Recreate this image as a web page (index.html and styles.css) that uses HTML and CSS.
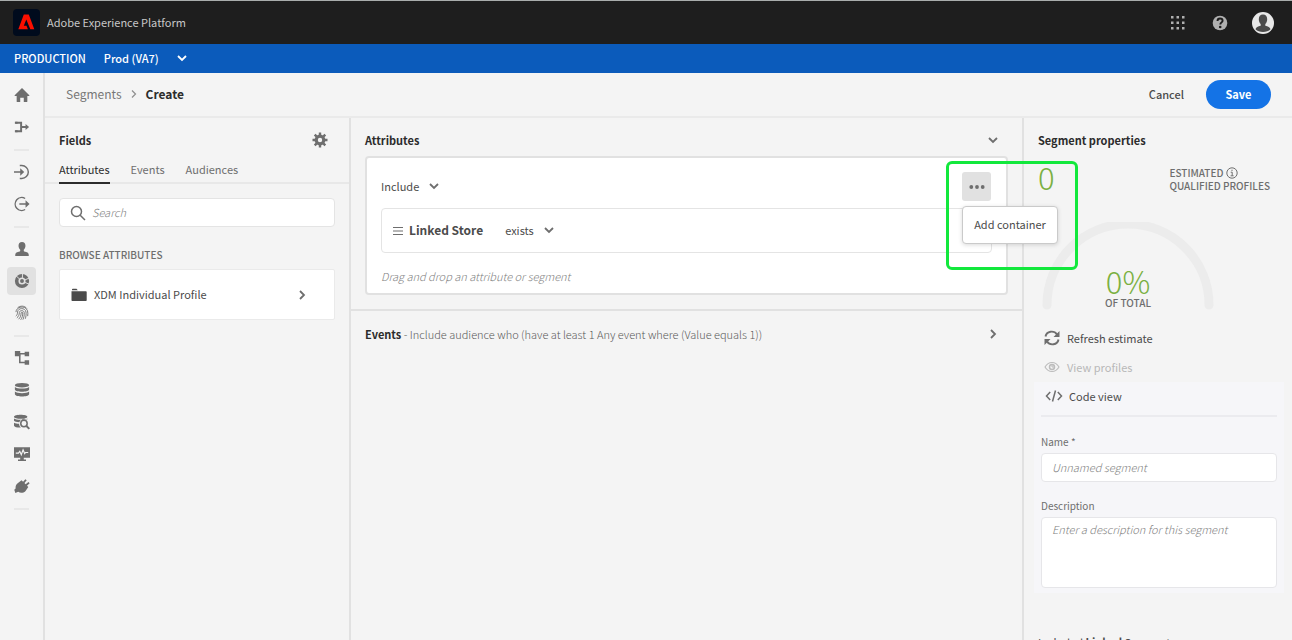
FILE: index.html
```html
<!DOCTYPE html>
<html lang="en">
<head>
<meta charset="utf-8">
<title>Create segment - Adobe Experience Platform</title>
<meta name="viewport" content="width=device-width, initial-scale=1">
<link rel="stylesheet" href="styles.css">
</head>
<body>
<header class="topbar">
  <svg class="logo" viewBox="0 0 27 27" aria-hidden="true"><rect width="27" height="27" rx="4" fill="#000b1d"/><path fill="#fa0f00" d="M10.800 5.500h5L21.300 20.300h-4L13.300 10.600 10.800 16.700h2.700l1.400 3.600H5.300z"/></svg>
  <span class="product">Adobe Experience Platform</span>
  <div class="top-actions">
    <button class="icon-btn" aria-label="Apps"><svg width="16" height="16" viewBox="0 0 16 16" fill="#b0b0b0"><path d="M1 1h2.500v2.500H1zM6.500 1H9v2.500H6.500zM12 1h2.500v2.500H12zM1 6.500h2.500V9H1zM6.500 6.500H9V9H6.500zM12 6.500h2.500V9H12zM1 12h2.500v2.500H1zM6.500 12H9v2.500H6.500zM12 12h2.500v2.500H12z"/></svg></button>
    <button class="icon-btn" aria-label="Help"><svg width="16" height="16" viewBox="0 0 16 16"><circle cx="8" cy="8" r="7.300" fill="#b0b0b0"/><path d="M5.500 6C5.500 4.200 6.600 3.500 8 3.500s2.600.8 2.600 2.200C10.600 7.400 8.300 7.400 8.300 9.500" fill="none" stroke="#1e1e1e" stroke-width="1.900"/><circle cx="8.200" cy="12" r="1.300" fill="#1e1e1e"/></svg></button>
    <button class="icon-btn" aria-label="Account"><svg width="22" height="22" viewBox="0 0 22 22"><circle cx="11" cy="11" r="11" fill="#e8e8e8"/><path fill="#4b4b4b" d="M11 2.500c2.700 0 4.200 1.900 4.200 4.700 0 2-.8 3.800-1.900 4.800v1.700c2.600.6 5 1.400 5.200 3.600-1.700 1.800-4.500 2.700-7.500 2.700s-5.800-.9-7.500-2.700c.2-2.200 2.600-3 5.200-3.600V12c-1.100-1-1.900-2.800-1.900-4.800 0-2.800 1.500-4.700 4.200-4.700z"/></svg></button>
  </div>
</header>
<div class="sandbox-bar">
  <span>PRODUCTION</span>
  <button class="sandbox-pick">Prod (VA7)<svg class="chev" viewBox="0 0 10 10"><path d="M1 3l4 4 4-4"/></svg></button>
</div>
<div class="shell">
  <nav class="rail" aria-label="Main">
    <a href="#" aria-label="Home"><svg viewBox="0 0 18 18"><path d="M9 1L.8 9.200c-.3.400-.1.800.4.800H3v6.300c0 .4.300.7.700.7H7v-5h4v5h3.300c.4 0 .7-.3.700-.7V10h1.800c.5 0 .7-.4.400-.8z"/></svg></a>
    <a href="#" aria-label="Workflows"><svg viewBox="0 0 18 18"><path d="M1.500 4.200H8v9.600H1.500M8 9h5.500" fill="none" stroke="#6e6e6e" stroke-width="2.200"/><path d="M13 5.500L17 9l-4 3.500zM1 3h3v2.400H1zM1 12.600h3V15H1z"/></svg></a>
    <hr>
    <a href="#" aria-label="Sources"><svg viewBox="0 0 18 18"><path d="M6.500 1.700h2.300a7.300 7.300 0 0 1 0 14.600H6.500" fill="none" stroke="#6e6e6e" stroke-width="1.600"/><path d="M0 8.200h7V4.800L11.500 9 7 13.200V9.800H0z"/></svg></a>
    <a href="#" aria-label="Destinations"><svg viewBox="0 0 18 18"><path d="M12.500 2.800A7.300 7.300 0 1 0 12.500 15.200" fill="none" stroke="#6e6e6e" stroke-width="1.600"/><path d="M6 8.200h7V4.800L17.500 9 13 13.200V9.800H6z"/></svg></a>
    <hr>
    <a href="#" aria-label="Profiles"><svg viewBox="0 0 18 18"><path d="M9 1c2.600 0 3.900 1.800 3.900 4.300 0 1.900-.8 3.600-1.900 4.600v1.200c0 .4.200.7.600.8 3 .5 5 1.500 5 3.600V17H1.400v-1.500c0-2.100 2-3.100 5-3.600.4-.1.600-.4.600-.8V9.900C5.900 8.900 5.100 7.200 5.100 5.300 5.100 2.800 6.400 1 9 1z"/></svg></a>
    <a href="#" class="current" aria-label="Segments" aria-current="page"><svg viewBox="0 0 18 18"><circle cx="9" cy="9" r="6" fill="none" stroke="#6e6e6e" stroke-width="4"/><circle cx="9" cy="9" r="2.200"/><path d="M9.500 5.500V0M11.800 8L17.500 5.500M12 10.500l5 2M6.500 7L2 2.800" stroke="#e1e1e1" stroke-width="1.100"/></svg></a>
    <a href="#" aria-label="Identities"><svg viewBox="0 0 18 18" class="lines"><path d="M4 3.200C7 .5 12 .6 14.500 4M2.200 8c0-6 10.300-8.500 13-1.500.5 1.800.5 4 .2 6M2 12.500c1.500-1 1.900-2.500 2-4.500.2-5 8.700-5.500 9.500 0 .3 2.500 0 5-.8 7.500M3.200 14.500c2-1.500 2.700-3.500 2.800-6C6.200 5.700 11 5.500 11.500 8.500c.3 2.900-.4 5.500-1.500 8M5.200 16c2-2 2.700-4.300 2.800-7 .1-1.300 1.700-1.300 1.800 0 .1 3-.7 5.400-2.300 7.700"/></svg></a>
    <hr>
    <a href="#" aria-label="Schemas"><svg viewBox="0 0 18 18"><path d="M1 1h6v6H1zM12 2h5v5h-5zM12 11.500h5v5h-5z"/><path d="M6 4.300h7M6.500 5v9H13" fill="none" stroke="#6e6e6e" stroke-width="1.700"/></svg></a>
    <a href="#" aria-label="Datasets"><svg viewBox="0 0 18 18"><ellipse cx="9" cy="3.600" rx="8" ry="2.600"/><path d="M1 5.500c2.500 2.400 13.500 2.400 16 0v3.300c-1 3-15 3-16 0zM1 10.800c2.500 2.400 13.500 2.400 16 0v3c-1 3.400-15 3.400-16 0z"/></svg></a>
    <a href="#" aria-label="Queries"><svg viewBox="0 0 18 18"><path d="M0 3c0-3 15-3 15 0s-15 3-15 0zM0 5c2 2 13 2 15 0v1.200C10.500 4.400 7 6.200 6 9.300 3 9.200.5 8.700 0 7.700zM0 9.800c1.600.8 3.500 1 5.700 1.100 0 1.700.8 3.300 2 4.400C4 15.400.4 15 0 13.300z"/><circle cx="11.200" cy="10.700" r="3.600" fill="none" stroke="#6e6e6e" stroke-width="1.700"/><path d="M14 13.500l3.300 3.300" stroke="#6e6e6e" stroke-width="2.200"/></svg></a>
    <a href="#" aria-label="Monitoring"><svg viewBox="0 0 18 18"><path d="M0 1.500h18v11.800h-7v2h2.500V17h-9v-1.700H7v-2H0z"/><path d="M2 8h3l1.500-2L8.200 9.800l2-5.500L12 8.500l1-1.200h3" fill="none" stroke="#f4f4f4" stroke-width="1.300"/></svg></a>
    <a href="#" aria-label="Connections"><svg viewBox="0 0 18 18"><path d="M8.500 2.600l1.700 1.700 2.600-3 1.500 1.300-2.500 3.100 1.300 1.200 3.200-2.500 1.300 1.500-3 2.700 1.500 1.500-3.300 4.700c-2.300 2.300-6 2.200-8 .8L1.500 17 .3 13.300l1.500-1.600C1.500 9 2.500 7 4.500 5.500z"/></svg></a>
    <hr>
  </nav>
  <main class="workspace">
    <div class="page-head">
      <nav class="crumbs" aria-label="Breadcrumb"><a href="#">Segments</a><svg class="crumb-sep" viewBox="0 0 8 8"><path d="M2 .5L5.500 4 2 7.500"/></svg><h1>Create</h1></nav>
      <div class="page-actions"><button class="cancel">Cancel</button><button class="save">Save</button></div>
    </div>
    <div class="columns">
      <section class="fields">
        <div class="panel-head"><h2>Fields</h2>
          <button class="icon-btn" aria-label="Settings"><svg width="16" height="16" viewBox="0 0 16 16"><circle cx="8" cy="8" r="3.800" fill="none" stroke="#6e6e6e" stroke-width="3.200"/><path d="M8 .5v3M8 12.500v3M.5 8h3M12.500 8h3M2.700 2.700l2 2M11.300 11.300l2 2M13.300 2.700l-2 2M4.700 11.300l-2 2" stroke="#6e6e6e" stroke-width="2.400"/></svg></button></div>
        <div class="tabs" role="tablist">
          <button class="tab selected" role="tab" aria-selected="true">Attributes</button>
          <button class="tab" role="tab" aria-selected="false">Events</button>
          <button class="tab" role="tab" aria-selected="false">Audiences</button>
        </div>
        <div class="fields-body">
          <label class="search"><svg width="16" height="16" viewBox="0 0 16 16"><circle cx="6.500" cy="6.500" r="5" /><path d="M10.200 10.200L15 15"/></svg><input type="search" placeholder="Search" aria-label="Search"></label>
          <h3 class="caption">BROWSE ATTRIBUTES</h3>
          <button class="folder"><svg width="16" height="14" viewBox="0 0 16 14"><path d="M1 1.500C1 1 1.300.8 1.800.8h3.700l1.300 1.500H1z" fill="#4b4b4b"/><path d="M.5 3.200H15c.4 0 .7.300.7.700v8.400c0 .4-.3.700-.7.700H1.200c-.4 0-.7-.3-.7-.7z" fill="#4b4b4b"/></svg><span>XDM Individual Profile</span><svg class="chev" viewBox="0 0 10 10"><path d="M3 1l4 4-4 4"/></svg></button>
        </div>
      </section>
      <section class="canvas">
        <div class="attributes">
          <div class="section-head"><h2>Attributes</h2><button class="icon-btn" aria-label="Collapse attributes"><svg class="chev" viewBox="0 0 10 10"><path d="M1 3l4 4 4-4"/></svg></button></div>
          <div class="group">
            <div class="group-head">
              <button class="picker">Include<svg class="chev" viewBox="0 0 10 10"><path d="M1 3l4 4 4-4"/></svg></button>
              <div class="more-wrap">
                <button class="more" aria-label="More options"><svg width="16" height="4" viewBox="0 0 16 4"><circle cx="2.300" cy="2" r="1.900"/><circle cx="8" cy="2" r="1.900"/><circle cx="13.700" cy="2" r="1.900"/></svg></button>
                <button class="menu">Add container</button>
                <div class="highlight"></div>
              </div>
            </div>
            <div class="rule">
              <svg width="10" height="8" viewBox="0 0 10 8"><path d="M0 .5h10M0 4h10M0 7.500h10" stroke="#6e6e6e"/></svg>
              <strong>Linked Store</strong>
              <button class="picker">exists<svg class="chev" viewBox="0 0 10 10"><path d="M1 3l4 4 4-4"/></svg></button>
            </div>
            <p class="hint">Drag and drop an attribute or segment</p>
          </div>
        </div>
        <div class="events"><p><b>Events</b> - Include audience who (have at least 1 Any event where (Value equals 1))</p><button class="icon-btn" aria-label="Expand events"><svg class="chev" viewBox="0 0 10 10"><path d="M3 1l4 4-4 4"/></svg></button></div>
      </section>
      <aside class="properties">
        <h2>Segment properties</h2>
        <div class="estimate"><span class="count">0</span>
          <div class="estimate-label"><span class="estimate-top">ESTIMATED <svg width="12" height="12" viewBox="0 0 12 12"><circle cx="6" cy="6" r="5.200"/><path d="M4.700 5.200H6.200v3.500M4.600 8.800h3M6 2.700v1.300"/></svg></span><span>QUALIFIED PROFILES</span></div></div>
        <div class="gauge">
          <svg viewBox="0 0 172 88"><path d="M5 83a81 81 0 0 1 162 0"/></svg>
          <div class="gauge-text"><span class="percent">0%</span><span class="total">OF TOTAL</span></div>
        </div>
        <button class="action"><svg width="16" height="16" viewBox="0 0 16 16"><path d="M1.500 6.500C2.500 1 10 0 13 4.500M14.500 9.500C13.500 15 6 16 3 11.500" fill="none" stroke="#6e6e6e" stroke-width="1.900"/><path d="M15.500 1v6h-6zM.5 15V9h6z" fill="#6e6e6e"/></svg>Refresh estimate</button>
        <button class="action" disabled><svg width="16" height="16" viewBox="0 0 16 16"><path d="M1 8C4.500 2 11.500 2 15 8 11.500 14 4.500 14 1 8z" fill="none" stroke="#bcbcbc" stroke-width="1.100"/><circle cx="8" cy="8" r="2.500" fill="none" stroke="#bcbcbc" stroke-width="1.500"/><path d="M8 5.500V8h2.500" fill="none" stroke="#bcbcbc"/></svg>View profiles</button>
        <div class="details">
          <button class="action code"><svg width="18" height="16" viewBox="0 0 18 16"><path d="M5.200 4L1.500 8l3.700 4M12.800 4l3.700 4-3.700 4M10.500 2.500l-3 11" fill="none" stroke="#6e6e6e" stroke-width="1.500"/></svg>Code view</button>
          <label for="name">Name *</label>
          <input id="name" type="text" placeholder="Unnamed segment">
          <label for="desc">Description</label>
          <textarea id="desc" placeholder="Enter a description for this segment"></textarea>
        </div>
        <p class="included">Included <b>Linked</b> Segments</p>
      </aside>
    </div>
  </main>
</div>
</body>
</html>
```
FILE: styles.css
```css
* { box-sizing: border-box; }
body {
  margin: 0;
  height: 100vh;
  display: flex;
  flex-direction: column;
  overflow: hidden;
  background: #f4f4f4;
  color: #4b4b4b;
  font: 11px/18px "Noto Sans CJK SC", "Noto Sans", sans-serif;
}
button, input, textarea { font: inherit; color: inherit; }
button { padding: 0; border: 0; background: none; cursor: pointer; }
h1, h2, h3, p { margin: 0; font-size: inherit; }
h1, h2 { color: #2c2c2c; }
svg { display: block; flex: none; }
.icon-btn { display: flex; justify-content: center; }
.chev { width: 10px; height: 10px; fill: none; stroke: #6e6e6e; stroke-width: 1.8; }

.topbar {
  flex: none;
  height: 44px;
  display: flex;
  align-items: center;
  gap: 7px;
  padding: 0 18px 0 13px;
  border-top: 1px solid #a9adac;
  background: #1e1e1e;
  color: #c8c8c8;
}
.logo { width: 27px; height: 27px; }
.product { padding-bottom: 2px; }
.top-actions { margin-left: auto; display: flex; align-items: center; gap: 22px; }
.top-actions .icon-btn { min-width: 20px; }
.sandbox-bar {
  flex: none;
  height: 29px;
  display: flex;
  align-items: center;
  gap: 18px;
  padding: 0 14px 2px;
  background: #0b5bbb;
  color: #fff;
  font-weight: 500;
}
.sandbox-pick { display: flex; align-items: center; gap: 18px; }
.sandbox-bar .chev { stroke: #fff; }

.shell { flex: 1; min-height: 0; display: flex; }
.rail {
  flex: none;
  width: 45px;
  padding: 8px 7px;
  display: flex;
  flex-direction: column;
  align-items: center;
  gap: 4px;
  border-right: 2px solid #e1e1e1;
}
.rail a { width: 29px; height: 28px; display: grid; place-items: center; border-radius: 4px; }
.rail svg { width: 16px; height: 16px; fill: #6e6e6e; }
.rail .lines { fill: none; stroke: #6e6e6e; stroke-width: 1; }
.rail .current { background: #e1e1e1; }
.rail hr { width: 15px; height: 2px; margin: 4px 0 3px; border: 0; background: #e8e8e8; flex: none; }

.workspace { flex: 1; min-width: 0; display: flex; flex-direction: column; }
.page-head {
  flex: none;
  height: 45px;
  display: flex;
  align-items: center;
  justify-content: space-between;
  padding: 0 21px;
  border-bottom: 2px solid #eaeaea;
}
.crumbs { display: flex; align-items: center; gap: 8px; padding-bottom: 1px; font-size: 12px; }
.crumbs a { color: #777; text-decoration: none; }
.crumb-sep { width: 8px; height: 8px; fill: none; stroke: #8e8e8e; stroke-width: 1.2; }
.page-actions { display: flex; align-items: center; gap: 22px; font-weight: 500; }
.cancel { padding-bottom: 2px; }
.save { width: 65px; height: 29px; padding-bottom: 2px; border-radius: 15px; background: #1473e6; color: #fff; font-weight: 700; }

.columns { flex: 1; min-height: 0; display: grid; grid-template-columns: 306px minmax(0, 1fr) 270px; }
.fields { border-right: 2px solid #e1e1e1; }
.panel-head { display: flex; align-items: center; justify-content: space-between; padding: 13px 21px 0 14px; }
.tabs { display: flex; gap: 21px; padding: 11px 14px 0; border-bottom: 2px solid #e8e8e8; }
.tab { height: 24px; margin-bottom: -2px; padding-bottom: 7px; border-bottom: 2px solid transparent; color: #6e6e6e; }
.tab.selected { color: #2c2c2c; border-color: #2c2c2c; }
.fields-body { padding: 14px 14px 0; }
.search {
  display: flex;
  align-items: center;
  gap: 6px;
  height: 29px;
  padding: 0 10px;
  border: 1px solid #e4e4e4;
  border-radius: 4px;
  background: #fff;
}
.search svg { fill: none; stroke: #6e6e6e; stroke-width: 1.5; }
.search input { flex: 1; min-width: 0; padding: 0 0 2px; border: 0; outline: 0; background: none; }
::placeholder { color: #808080; font-style: italic; font-weight: 300; opacity: 1; }
.caption { margin: 19px 0 5px; color: #6e6e6e; font-size: 10px; font-weight: 500; }
.folder {
  width: 100%;
  height: 51px;
  display: flex;
  align-items: center;
  gap: 7px;
  padding: 0 27px 0 11px;
  border: 1px solid #eaeaea;
  border-radius: 2px;
  background: #fff;
}
.folder span { padding-bottom: 2px; }
.folder .chev { margin-left: auto; }

.canvas { min-width: 0; }
.attributes { padding: 13px 14px 14px; border-bottom: 2px solid #e1e1e1; }
.section-head { display: flex; justify-content: space-between; align-items: center; padding-right: 10px; }
.group { margin-top: 7px; padding: 14px 14px 9px; border: 2px solid #e1e1e1; border-radius: 4px; background: #fff; }
.group-head { display: flex; align-items: center; justify-content: space-between; }
.picker { display: flex; align-items: center; gap: 10px; padding-bottom: 2px; }
.more-wrap { position: relative; margin-right: 1px; }
.more { width: 29px; height: 29px; display: grid; place-items: center; border-radius: 3px; background: #e1e1e1; }
.more svg { fill: #6e6e6e; }
.menu {
  position: absolute;
  z-index: 2;
  left: 0;
  top: 34px;
  width: 96px;
  height: 38px;
  padding-bottom: 2px;
  border: 1px solid #cacaca;
  border-radius: 4px;
  background: #fff;
  box-shadow: 0 1px 4px rgba(0, 0, 0, .15);
  white-space: nowrap;
}
.highlight {
  position: absolute;
  z-index: 3;
  left: -16px;
  top: -11px;
  width: 132px;
  height: 109px;
  border: 3px solid #12e83c;
  border-radius: 6px;
  pointer-events: none;
}
.rule { height: 45px; margin-top: 7px; display: flex; align-items: center; gap: 6px; padding: 0 11px; border: 1px solid #e4e4e4; border-radius: 4px; }
.rule strong { margin-right: 16px; padding-bottom: 2px; font-size: 12px; }
.hint { margin-top: 15px; color: #808080; font-style: italic; font-weight: 300; line-height: 16px; }
.events { display: flex; justify-content: space-between; align-items: center; padding: 14px 24px 14px 14px; color: #5a5a5a; font-weight: 300; }
.events b { color: #2c2c2c; font-weight: 700; }

.properties { min-width: 0; padding: 13px 16px 0 14px; border-left: 2px solid #e1e1e1; overflow: hidden; }
.estimate { display: flex; justify-content: space-between; align-items: center; margin-top: 12px; padding-right: 6px; }
.count, .percent { color: #7ab041; font-weight: 300; font-size: 31px; line-height: 32px; }
.count { padding-bottom: 4px; }
.estimate-label { display: flex; flex-direction: column; color: #6e6e6e; font-size: 10px; line-height: 13px; font-weight: 500; }
.estimate-top { display: flex; align-items: center; gap: 3px; }
.estimate-label svg { fill: none; stroke: #6e6e6e; }
.gauge { display: grid; width: max-content; justify-items: center; align-items: end; margin: 25px 0 14px; padding-left: 4px; }
.gauge > * { grid-area: 1 / 1; }
.gauge > svg { width: 172px; fill: none; stroke: #ececec; stroke-width: 9; stroke-linecap: round; }
.gauge-text { display: flex; flex-direction: column; align-items: center; }
.percent { line-height: 30px; }
.total { font-size: 10px; line-height: 14px; font-weight: 500; color: #6e6e6e; }
.action { display: flex; align-items: center; gap: 7px; height: 29px; padding: 0 0 2px 6px; }
.action:disabled { color: #b8b8b8; }
.details { margin: 0 -8px 0 -4px; padding: 0 7px 5px; background: #f6f6f9; }
.details .action { width: 100%; height: 35px; padding-bottom: 5px; padding-left: 4px; gap: 6px; border-bottom: 2px solid #ebebef; }
.details label { display: block; margin-top: 16px; color: #6e6e6e; font-size: 10px; }
.details input, .details textarea { display: block; width: 100%; border: 1px solid #e6e6e9; border-radius: 4px; background: #fff; padding: 0 10px 2px; outline: 0; }
.details input { height: 29px; margin-top: 2px; }
.details input + label { margin-top: 15px; }
.details textarea { height: 71px; margin-top: 2px; padding-top: 2px; resize: none; }
.included { margin-top: 40px; }
```
